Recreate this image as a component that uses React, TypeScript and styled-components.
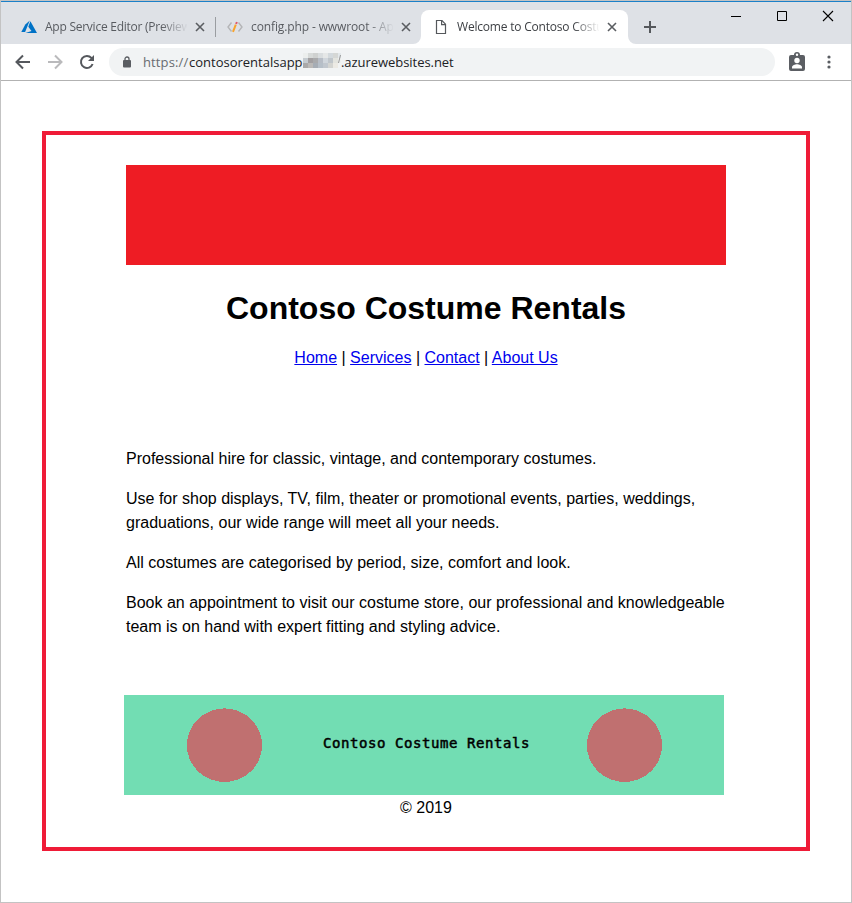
import React from 'react';
import styled, { createGlobalStyle } from 'styled-components';

const Global = createGlobalStyle`
  * { box-sizing: border-box; }
  body { margin: 0; background: #fff; }
`;

const Window = styled.div`
  width: 852px;
  height: 903px;
  display: flex;
  flex-direction: column;
  border: 1px solid #c3c3c3;
  background: #fff;
  overflow: hidden;
`;

const TitleBar = styled.header`
  height: 43px;
  flex: none;
  display: flex;
  align-items: flex-end;
  background: #dee1e6;
  border-top: 1px solid #1b80c8;
`;

const Tab = styled.div<{ $width: number; $left: number; $active?: boolean }>`
  position: relative;
  width: ${p => p.$width}px;
  height: 34px;
  padding-left: ${p => p.$left}px;
  display: flex;
  align-items: center;
  border-radius: 8px 8px 0 0;
  background: ${p => (p.$active ? '#fff' : 'transparent')};
`;

const Flare = styled.svg<{ $side: 'left' | 'right' }>`
  position: absolute;
  bottom: 0;
  ${p => p.$side}: -8px;
`;

const TabIcon = styled.span`
  width: 16px;
  height: 16px;
  margin-right: 8px;
  flex: none;
  display: flex;
`;

const TabTitle = styled.span<{ $active?: boolean; $spacing: number }>`
  width: 142px;
  height: 20px;
  flex: none;
  overflow: hidden;
  white-space: nowrap;
  font: 12px/20px "Open Sans", "Noto Sans", sans-serif;
  letter-spacing: ${p => p.$spacing}px;
  color: ${p => (p.$active ? '#3c3f43' : '#585b60')};
  mask-image: linear-gradient(to right, #000 116px, transparent 143px);
`;

const CloseIcon = styled.svg`
  margin-left: 8px;
  flex: none;
`;

const Divider = styled.span`
  width: 1px;
  height: 20px;
  margin-bottom: 7px;
  background: #9a9da1;
`;

const NewTab = styled.svg`
  margin: 0 0 10px 15px;
`;

const WindowControls = styled.div`
  margin-left: auto;
  align-self: flex-start;
  display: flex;
  gap: 34px;
  padding: 8px 17px 0 0;
`;

const Toolbar = styled.div`
  height: 37px;
  flex: none;
  display: flex;
  align-items: center;
  padding: 0 13px 0 13px;
  border-bottom: 1px solid #b2b2b2;
`;

const NavButtons = styled.div`
  display: flex;
  gap: 14px;
  width: 95px;
`;

const Address = styled.div`
  width: 666px;
  height: 28px;
  display: flex;
  align-items: center;
  padding-left: 14px;
  border-radius: 14px;
  background: #f1f3f4;
`;

const Url = styled.span`
  display: flex;
  align-items: center;
  margin-left: 12px;
  height: 28px;
  font: 13px/28px "Open Sans", "Noto Sans", sans-serif;
  color: #202124;
`;

const UrlPart = styled.span<{ $width: number; $spacing: number; $muted?: boolean }>`
  width: ${p => p.$width}px;
  white-space: nowrap;
  letter-spacing: ${p => p.$spacing}px;
  color: ${p => (p.$muted ? '#686b70' : '#202124')};
`;

const Mosaic = styled.svg`
  flex: none;
  margin-top: -3px;
`;

const Actions = styled.div`
  display: flex;
  align-items: center;
  gap: 17px;
  margin-left: 12px;
`;

const Viewport = styled.main`
  flex: 1;
  padding: 50px 41px 51px;
`;

const Frame = styled.div`
  height: 720px;
  display: flex;
  flex-direction: column;
  align-items: center;
  padding-top: 30px;
  border: 4px solid #ef1b37;
  font-family: "Liberation Sans", Arial, sans-serif;
  font-size: 16px;
  line-height: 24px;
  color: #000;
`;

const Banner = styled.div`
  width: 600px;
  height: 100px;
  flex: none;
  background: #ee1c24;
`;

const Heading = styled.h1`
  margin: 19px 0 14px;
  font-size: 32px;
  line-height: 48px;
`;

const Links = styled.nav`
  white-space: pre;
  a { color: #0000ee; }
`;

const Copy = styled.div`
  width: 600px;
  margin-top: 77px;
  p { margin: 0 0 16px; white-space: nowrap; }
`;

const FooterBanner = styled.div`
  width: 600px;
  height: 100px;
  flex: none;
  display: flex;
  align-items: center;
  margin: 40px 4px 1px 0;
  padding-left: 62px;
  background: #72ddb3;
`;

const BannerText = styled.span`
  width: 208px;
  margin: -5px 55px 0 61px;
  white-space: pre;
  font: 14px/16px "DejaVu Sans Mono", monospace;
  letter-spacing: 0.57px;
  -webkit-text-stroke: 0.5px #000;
`;

const Close = () => (
  <CloseIcon width="10" height="10" viewBox="0 0 10 10" stroke="#5a5d61" strokeWidth="1.6">
    <path d="M1 1l8 8M9 1l-8 8" />
  </CloseIcon>
);

const Flares = () => (
  <>
    <Flare $side="left" width="8" height="8"><path d="M8 0v8H0a8 8 0 0 0 8-8z" fill="#fff" /></Flare>
    <Flare $side="right" width="8" height="8"><path d="M0 0v8h8a8 8 0 0 1-8-8z" fill="#fff" /></Flare>
  </>
);

const Disc = () => (
  <svg width="76" height="76" viewBox="0 0 76 76" shapeRendering="crispEdges">
    <ellipse cx="38.5" cy="38.2" rx="37.6" ry="36.8" fill="#c07070" />
  </svg>
);

const mosaicRows = [
  ['#eceeed', '#d7dad9', '#cfd1d0', '#d9dddf', '#e5e7e7', '#d3d9dd', '#d5d7d5', '#e3e8eb'],
  ['#c5cbd0', '#a29fa1', '#a9aaac', '#b7bdc6', '#d0d6dc', '#c0c6cb', '#e3e4df', '#eef0ef'],
  ['#aaa9a9', '#bbb9b7', '#a6adb5', '#b6bfc8', '#c1c7ce', '#d3d4d1', '#eceae4', '#f1f3f4'],
];

const App = () => (
  <>
    <Global />
    <Window>
      <TitleBar>
        <Tab $width={214} $left={20}>
          <TabIcon>
            <svg width="16" height="16" viewBox="0 0 16 16">
              <path d="M8.800 1.600L4.300 5.400 0.300 13h3.800z" fill="#0072c6" />
              <path d="M9.400 2.300L7.300 7.800l3.200 4.300-6 1.900H16z" fill="#0072c6" />
            </svg>
          </TabIcon>
          <TabTitle $spacing={-0.25}>App Service Editor (Preview)</TabTitle>
          <Close />
        </Tab>
        <Divider />
        <Tab $width={205} $left={11}>
          <TabIcon>
            <svg width="16" height="16" viewBox="0 0 16 16" fill="none">
              <path d="M4.500 3.500L1 8l3.500 4.500M11.500 3.500L15 8l-3.500 4.500" stroke="#b4b5b7" strokeWidth="1.4" />
              <path d="M6 12.800l2.800-7.200" stroke="#f8a32c" strokeWidth="2" />
              <path d="M9.100 5l.8-2" stroke="#e0566b" strokeWidth="2" />
            </svg>
          </TabIcon>
          <TabTitle $spacing={-0.12}>config.php - wwwroot - App Service</TabTitle>
          <Close />
        </Tab>
        <Tab $width={207} $left={12} $active>
          <Flares />
          <TabIcon>
            <svg width="16" height="16" viewBox="0 0 16 16" fill="none" stroke="#55585c" strokeWidth="1.2">
              <path d="M3.500 1.500h5.500l3.500 3.700v9.300h-9z" />
              <path d="M8.600 1.800v3.800h3.800" />
            </svg>
          </TabIcon>
          <TabTitle $active $spacing={-0.2}>Welcome to Contoso Costume Rentals</TabTitle>
          <Close />
        </Tab>
        <NewTab width="14" height="14" stroke="#55585c" strokeWidth="2">
          <path d="M7 1v12M1 7h12" />
        </NewTab>
        <WindowControls>
          <svg width="12" height="12" fill="none" stroke="#000"><path d="M1 6.500h10" /></svg>
          <svg width="12" height="12" fill="none" stroke="#000"><path d="M1.500 1.500h9v9h-9z" /></svg>
          <svg width="12" height="12" fill="none" stroke="#000" strokeWidth="1.1"><path d="M1 1l10 10M11 1L1 11" /></svg>
        </WindowControls>
      </TitleBar>

      <Toolbar>
        <NavButtons>
          <svg width="18" height="18" fill="none" stroke="#55585d" strokeWidth="2">
            <path d="M16 9H3M9 2.500L2.500 9 9 15.500" />
          </svg>
          <svg width="18" height="18" fill="none" stroke="#bababc" strokeWidth="2">
            <path d="M2 9h13M9 2.500L15.500 9 9 15.500" />
          </svg>
          <svg width="18" height="18" fill="none" stroke="#55585d" strokeWidth="2">
            <path d="M14.600 11A6 6 0 1 1 13.400 4.900L15 6.500" />
            <path d="M16 2v6h-6z" fill="#55585d" stroke="none" />
          </svg>
        </NavButtons>
        <Address>
          <svg width="8" height="12" viewBox="0 0 8 12">
            <path d="M2 5V3a2 2 0 0 1 4 0v2" fill="none" stroke="#5a5d62" strokeWidth="1.3" />
            <rect y="4" width="8" height="7.500" rx="1" fill="#5a5d62" />
          </svg>
          <Url>
            <UrlPart $muted $width={46} $spacing={0.12}>https://</UrlPart>
            <UrlPart $width={114} $spacing={0}>contosorentalsapp</UrlPart>
            <Mosaic width="38" height="15" shapeRendering="crispEdges">
              {mosaicRows.map((row, y) =>
                row.map((fill, x) => <rect key={`${x}-${y}`} x={x * 5} y={y * 5} width="5" height="5" fill={fill} />),
              )}
              <path d="M37.500 2l-2 8" stroke="#999" shapeRendering="auto" />
            </Mosaic>
            <UrlPart $width={113} $spacing={-0.05}>.azurewebsites.net</UrlPart>
          </Url>
        </Address>
        <Actions>
          <svg width="20" height="20" viewBox="0 0 20 20">
            <path d="M4 3h3a3 3 0 0 1 6 0h3a2 2 0 0 1 2 2v12a2 2 0 0 1-2 2H4a2 2 0 0 1-2-2V5a2 2 0 0 1 2-2z" fill="#5b5e63" />
            <circle cx="10" cy="2.800" r="1.200" fill="#fff" />
            <circle cx="10" cy="8.500" r="2.700" fill="#fff" />
            <path d="M5 16.500v-1.300c0-1.900 3-3 5-3s5 1.100 5 3v1.300z" fill="#fff" />
          </svg>
          <svg width="10" height="18" fill="#5a5d62">
            <circle cx="5" cy="4" r="1.600" />
            <circle cx="5" cy="9" r="1.600" />
            <circle cx="5" cy="14" r="1.600" />
          </svg>
        </Actions>
      </Toolbar>

      <Viewport>
        <Frame>
          <Banner />
          <Heading>Contoso Costume Rentals</Heading>
          <Links>
            <a href="#home">Home</a> | <a href="#services">Services</a> | <a href="#contact">Contact</a> | <a href="#about">About Us</a>
          </Links>
          <Copy>
            <p>Professional hire for classic, vintage, and contemporary costumes.</p>
            <p>Use for shop displays, TV, film, theater or promotional events, parties, weddings,<br />graduations, our wide range will meet all your needs.</p>
            <p>All costumes are categorised by period, size, comfort and look.</p>
            <p>Book an appointment to visit our costume store, our professional and knowledgeable<br />team is on hand with expert fitting and styling advice.</p>
          </Copy>
          <FooterBanner>
            <Disc />
            <BannerText>Contoso Costume Rentals</BannerText>
            <Disc />
          </FooterBanner>
          <div>© 2019</div>
        </Frame>
      </Viewport>
    </Window>
  </>
);

export default App;
